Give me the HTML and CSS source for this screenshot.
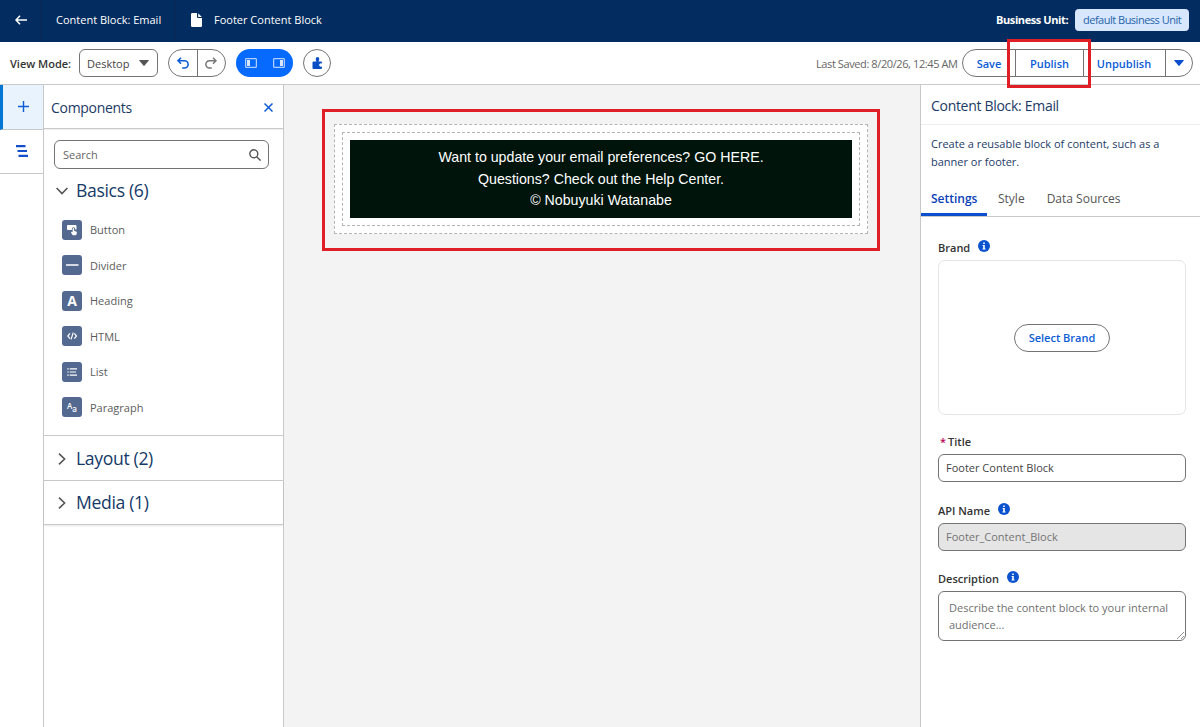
FILE: index.html
```html
<!DOCTYPE html>
<html lang="en">
<head>
  <meta charset="UTF-8" />
  <title>Footer Content Block</title>
  <link rel="stylesheet" href="styles.css">
</head>
<body>

<header class="topbar">
  <a class="back">
    <svg width="12" height="10" viewBox="0 0 12 10" fill="none" stroke="#fff" stroke-width="1.5"><path d="M5 .8L1 5l4 4.2M1 5h11"/></svg>
  </a>
  <div class="crumb">Content Block: Email</div>
  <div class="page-name">
    <svg width="11" height="14" viewBox="0 0 11 14" fill="#fff"><path d="M1.3 0H6v4q0 1 1 1h4v7.7q0 1.3-1.3 1.3H1.3Q0 14 0 12.7V1.3Q0 0 1.3 0zM7.2.3L10.8 4H7.2z"/></svg>
    <span>Footer Content Block</span>
  </div>
  <div class="unit">
    <b>Business Unit:</b>
    <span class="badge">default Business Unit</span>
  </div>
</header>

<div class="toolbar">
  <span class="view-label">View Mode:</span>
  <div class="select">Desktop
    <svg width="10" height="6" viewBox="0 0 10 6" fill="#555"><path d="M.6 0h8.800q.7 0 .4.6L5.600 5.600q-.6.6-1.200 0L.2.6Q-.1 0 .6 0z"/></svg>
  </div>
  <div class="history">
    <span><svg width="12" height="12" viewBox="0 0 12 12" fill="none" stroke="#0b5cd5" stroke-width="1.6"><path d="M4 .7L1 3.700l3 3M1.200 3.700h6.300a3.600 3.600 0 0 1 0 7.300H5.200"/></svg></span>
    <span><svg width="12" height="12" viewBox="0 0 12 12" fill="none" stroke="#777" stroke-width="1.5"><path d="M8 .7l3 3-3 3M10.800 3.700H4.500a3.600 3.600 0 0 0 0 7.300h2.300"/></svg></span>
  </div>
  <div class="panels">
    <svg width="12" height="10" viewBox="0 0 12 10"><path fill="none" stroke="#d8e6fe" d="M.7.7h10.600v8.600H.7z"/><path fill="#d8e6fe" d="M2 2h3v6H2z"/></svg>
    <svg width="12" height="10" viewBox="0 0 12 10"><path fill="none" stroke="#d8e6fe" d="M.7.7h10.600v8.600H.7z"/><path fill="#d8e6fe" d="M7 2h3v6H7z"/></svg>
  </div>
  <div class="puzzle">
    <svg width="11" height="12" viewBox="0 0 11 12" fill="#0b4fc4"><path d="M1.500 4.500h3Q3.600 3.200 3.700 1.900a1.800 1.800 0 0 1 3.600 0q0 1.300-.9 2.600H9q1 0 1 1v1Q7.600 5.800 7 8q.5 2.200 3 1.500V11q0 1-1 1H1.500q-1 0-1-1V5.500q0-1 1-1z"/></svg>
  </div>
  <div class="actions">
    <span class="saved">Last Saved: 8/20/26, 12:45 AM</span>
    <div class="btn-group">
      <span class="b-save">Save</span>
      <span class="b-publish">Publish</span>
      <span class="b-unpublish">Unpublish</span>
      <span class="b-more"><svg width="10" height="6" viewBox="0 0 10 6" fill="#0b4fd0"><path d="M.6 0h8.800q.7 0 .4.6L5.600 5.600q-.6.6-1.200 0L.2.6Q-.1 0 .6 0z"/></svg></span>
    </div>
  </div>
</div>

<main class="builder">
  <nav class="rail">
    <a class="active"><svg width="11" height="11" viewBox="0 0 11 11" stroke="#0b5cd5" stroke-width="1.4"><path d="M5.500 0v11M0 5.500h11"/></svg></a>
    <a><svg width="12" height="12" viewBox="0 0 12 12" fill="#1550cc"><path d="M0 0h9.500v2.200H0zM1.500 4.900H11v2.200H1.500zM2.500 9.800H12V12H2.500z"/></svg></a>
  </nav>

  <aside class="components">
    <div class="comp-head">
      <h2>Components</h2>
      <svg width="9" height="9" viewBox="0 0 9 9" stroke="#0b5cd5" stroke-width="1.5"><path d="M.5.5l8 8M8.500.5l-8 8"/></svg>
    </div>
    <div class="search">Search
      <svg width="12" height="12" viewBox="0 0 12 12" fill="none" stroke="#555" stroke-width="1.4"><circle cx="4.800" cy="4.800" r="4"/><path d="M7.700 7.700l3.900 3.900"/></svg>
    </div>
    <section class="basics">
      <h3><svg width="12" height="8" viewBox="0 0 12 8" fill="none" stroke="#555" stroke-width="1.6"><path d="M.6 1L6 6.600 11.400 1"/></svg>Basics (6)</h3>
      <ul>
        <li><svg class="tile" viewBox="0 0 20 20"><path fill="#fff" d="M6 5h7.500q1 0 1 1v3.500h-1.300V9a1.700 1.700 0 0 0-3.400 0v1H6Q5 10 5 9V6q0-1 1-1z"/><path fill="#fff" d="M10.600 9q0-.9.8-.9t.8.9v2l2 .4q.8.3.7 1.200l-.5 2q-.2.6-.8.6h-2.400q-.5 0-.8-.5l-1.300-2q-.3-.8.5-.9l1 .5z"/></svg>Button</li>
        <li><svg class="tile" viewBox="0 0 20 20"><path fill="#fff" d="M4 9.200h12.500v1.500H4z"/></svg>Divider</li>
        <li><span class="tile tile-a">A</span>Heading</li>
        <li><svg class="tile" viewBox="0 0 20 20" fill="none" stroke="#fff" stroke-width="1.2"><path d="M8 7.300L5.800 10 8 12.700M12.300 7.300l2.200 2.700-2.200 2.700M11.200 6.600L9.100 13.400"/></svg>HTML</li>
        <li><svg class="tile" viewBox="0 0 20 20"><path fill="#fff" d="M5.300 6.200h1.400v1.200H5.300zM7.700 6.200H15v1.200H7.700zM5.300 9.400h1.400v1.200H5.300zM7.700 9.400H14v1.200H7.700zM5.300 12.600h1.400v1.200H5.300zM7.700 12.600H15v1.200H7.700z"/></svg>List</li>
        <li><span class="tile tile-aa"><span>A</span><sub>a</sub></span>Paragraph</li>
      </ul>
    </section>
    <section class="closed">
      <h3><svg width="8" height="12" viewBox="0 0 8 12" fill="none" stroke="#555" stroke-width="1.6"><path d="M1 .6L6.600 6 1 11.400"/></svg>Layout (2)</h3>
    </section>
    <section class="closed last">
      <h3><svg width="8" height="12" viewBox="0 0 8 12" fill="none" stroke="#555" stroke-width="1.6"><path d="M1 .6L6.600 6 1 11.400"/></svg>Media (1)</h3>
    </section>
  </aside>

  <div class="canvas">
    <div class="frame">
      <div class="row">
        <div class="column">
          <div class="footer-text">
            <p>Want to update your email preferences? GO HERE.</p>
            <p>Questions? Check out the Help Center.</p>
            <p>© Nobuyuki Watanabe</p>
          </div>
        </div>
      </div>
    </div>
  </div>

  <aside class="props">
    <h2>Content Block: Email</h2>
    <p class="about">Create a reusable block of content, such as a<br>banner or footer.</p>
    <div class="tabs">
      <a class="on">Settings</a>
      <a>Style</a>
      <a>Data Sources</a>
    </div>
    <div class="form">
      <div class="label">Brand<svg class="info" viewBox="0 0 12 12"><circle cx="6" cy="6" r="6" fill="#0b52cf"/><path fill="#fff" d="M5.200 2.500h1.600v1.400H5.200zM4.600 5h2.200v3.400h.7v1H4.500v-1h.7V6h-.6z"/></svg></div>
      <div class="brand-box"><span class="pill">Select Brand</span></div>
      <div class="label title-label"><i>*</i>Title</div>
      <div class="input">Footer Content Block</div>
      <div class="label">API Name<svg class="info" viewBox="0 0 12 12"><circle cx="6" cy="6" r="6" fill="#0b52cf"/><path fill="#fff" d="M5.200 2.500h1.600v1.400H5.200zM4.600 5h2.200v3.400h.7v1H4.500v-1h.7V6h-.6z"/></svg></div>
      <div class="input disabled">Footer_Content_Block</div>
      <div class="label">Description<svg class="info" viewBox="0 0 12 12"><circle cx="6" cy="6" r="6" fill="#0b52cf"/><path fill="#fff" d="M5.200 2.500h1.600v1.400H5.200zM4.600 5h2.200v3.400h.7v1H4.500v-1h.7V6h-.6z"/></svg></div>
      <div class="textarea">Describe the content block to your internal<br>audience...
        <svg class="grip" width="7" height="7" viewBox="0 0 7 7" stroke="#777" stroke-width=".8"><path d="M0 7l7-7M4 7l3-3"/></svg>
      </div>
    </div>
  </aside>
</main>

</body>
</html>
```
FILE: styles.css
```css
* { box-sizing: border-box; }
body {
  margin: 0;
  height: 727px;
  display: flex;
  flex-direction: column;
  overflow: hidden;
  background: #fff;
  color: #444;
  font-family: "Open Sans", "Noto Sans", sans-serif;
  font-size: 11px;
  white-space: nowrap;
}
h2, h3, p, ul { margin: 0; padding: 0; font-weight: 400; }
svg { flex: none; display: block; }

/* header */
.topbar {
  height: 42px;
  flex: none;
  display: flex;
  align-items: center;
  padding-bottom: 2px;
  background: #032d60;
  color: #fff;
  font-weight: 500;
}
.back {
  width: 42px;
  height: 42px;
  display: flex;
  align-items: center;
  justify-content: center;
  border-right: 1px solid #0a2750;
}
.crumb {
  width: 133px;
  height: 42px;
  padding: 0 0 1px 14px;
  display: flex;
  align-items: center;
  border-right: 1px solid #0a2750;
}
.page-name { display: flex; align-items: center; gap: 12px; padding-left: 16px; }
.page-name span { padding-bottom: 1px; }
.unit { margin-left: auto; margin-right: 11px; display: flex; align-items: center; }
.unit b { width: 79px; padding-bottom: 1px; font-weight: 700; letter-spacing: -.4px; }
.badge {
  width: 114px;
  height: 22px;
  padding: 0 0 1px 8px;
  display: flex;
  align-items: center;
  border-radius: 4px;
  background: #d8e6fe;
  color: #2465a8;
  font-weight: 400;
  letter-spacing: -.5px;
}

/* toolbar */
.toolbar {
  height: 43px;
  flex: none;
  display: flex;
  align-items: center;
  padding: 0 7px 0 10px;
  border-bottom: 1px solid #c9c9c9;
}
.view-label { width: 69px; color: #333; font-weight: 600; }
.select {
  width: 79px;
  height: 28px;
  padding: 0 8px 0 7px;
  display: flex;
  align-items: center;
  justify-content: space-between;
  border: 1px solid #747474;
  border-radius: 6px;
}
.history {
  width: 58px;
  height: 28px;
  margin-left: 10px;
  display: flex;
  border: 1px solid #747474;
  border-radius: 14px;
}
.history span { flex: 1; display: flex; align-items: center; justify-content: center; }
.history span + span { border-left: 1px solid #747474; }
.panels {
  width: 57px;
  height: 28px;
  margin-left: 10px;
  padding: 0 8px 0 9px;
  display: flex;
  align-items: center;
  justify-content: space-between;
  border-radius: 14px;
  background: #066afe;
}
.puzzle {
  width: 28px;
  height: 28px;
  margin-left: 10px;
  display: flex;
  align-items: center;
  justify-content: center;
  border: 1px solid #747474;
  border-radius: 50%;
}
.actions { margin-left: auto; display: flex; align-items: center; }
.saved { width: 146px; color: #666; letter-spacing: -.4px; }
.btn-group {
  width: 231px;
  height: 28px;
  display: flex;
  border: 1px solid #747474;
  border-radius: 14px;
  color: #0b5cd5;
  font-weight: 600;
}
.btn-group > span { display: flex; align-items: center; justify-content: center; }
.b-save { width: 52px; }
.b-publish {
  position: relative;
  width: 69px;
  border-left: 1px solid #747474;
  border-right: 1px solid #747474;
}
/* highlight around the publish button */
.b-publish::after {
  content: "";
  box-sizing: border-box;
  position: absolute;
  z-index: 2;
  left: -9px;
  top: -11px;
  width: 84px;
  height: 49px;
  border: 3px solid #e01e26;
}
.b-unpublish { width: 81px; padding-right: 1px; }
.b-more { width: 27px; border-left: 1px solid #747474; }

.builder { flex: 1; display: flex; min-height: 0; }

/* left rail */
.rail { width: 44px; border-right: 1px solid #c9c9c9; }
.rail a {
  height: 44.5px;
  display: flex;
  align-items: center;
  justify-content: center;
  border-bottom: 1px solid #c9c9c9;
}
.rail .active { border-left: 3px solid #0176d3; background: #e8f3fe; }

/* components panel */
.components { width: 240px; border-right: 1px solid #c9c9c9; }
.comp-head {
  height: 44px;
  padding: 2px 10px 0 7px;
  display: flex;
  align-items: center;
  justify-content: space-between;
  border-bottom: 1px solid #c9c9c9;
  box-shadow: 0 1px 1px rgba(0, 0, 0, .06);
}
h2 { color: #1b3a66; font-size: 14px; letter-spacing: -.3px; }
.search {
  height: 29px;
  margin: 11px 14px 0 10px;
  padding: 0 7px 0 8px;
  display: flex;
  align-items: center;
  justify-content: space-between;
  border: 1px solid #747474;
  border-radius: 6px;
  color: #666;
}
h3 {
  display: flex;
  align-items: center;
  color: #153a68;
  font-size: 17.6px;
  line-height: 24px;
  letter-spacing: -.35px;
}
.basics { height: 267px; padding-top: 9px; border-bottom: 1px solid #c9c9c9; }
.basics h3 svg { margin: 2px 8px 0 12px; }
.basics ul { padding: 10px 0 0 18px; list-style: none; }
.basics li { height: 35.5px; display: flex; align-items: center; gap: 8px; color: #5c5c5c; }
.tile {
  width: 20px;
  height: 20px;
  flex: none;
  border-radius: 3px;
  background: #53698f;
  color: #fff;
}
.tile-a { font-size: 14px; font-weight: 700; line-height: 20px; text-align: center; }
.tile-aa { display: flex; padding-left: 5px; font-size: 8px; font-weight: 600; line-height: 17px; }
.tile-aa sub { font-size: 8px; line-height: 24px; vertical-align: baseline; }
.closed { height: 44.5px; padding-top: 9.5px; border-bottom: 1px solid #c9c9c9; }
.closed h3 svg { margin: 2px 10px 0 14px; }
.last { box-shadow: 0 1px 2px rgba(0, 0, 0, .1); }

/* canvas */
.canvas { flex: 1; padding: 24px 40px 0 38px; background: #f3f3f3; }
.frame { height: 142px; padding: 12px 9px; border: 3px solid #e01e26; }
.row { height: 110px; padding: 7px; border: 1px dashed #b4b4b4; background: #fff; }
.column { height: 94px; padding: 7px; border: 1px dashed #b4b4b4; }
.footer-text {
  height: 78px;
  padding-top: 7px;
  background: #00140c;
  color: #fff;
  font-family: "Liberation Sans", Arial, sans-serif;
  font-size: 14.2px;
  line-height: 21.5px;
  text-align: center;
}

/* properties panel */
.props { width: 280px; border-left: 1px solid #c9c9c9; }
.props h2 {
  height: 40px;
  padding: 1px 0 0 10px;
  display: flex;
  align-items: center;
  border-bottom: 1px solid #eee;
}
.about { height: 60px; padding: 10px 10px 0; color: #1d3c68; line-height: 17.5px; }
.tabs {
  height: 32px;
  display: flex;
  border-bottom: 1px solid #c9c9c9;
  color: #555;
  font-size: 12px;
  font-weight: 500;
}
.tabs a { height: 31px; padding: 5px 11px 0; }
.tabs .on {
  width: 66px;
  padding: 5px 0 0 10px;
  border-bottom: 3px solid #0b4fcf;
  color: #0b3fb5;
  font-weight: 600;
}
.form { padding: 18px 14px 0 17px; }
.label {
  height: 25px;
  padding-top: 5px;
  display: flex;
  align-items: flex-start;
  gap: 8px;
  color: #333;
  font-weight: 600;
  line-height: 15px;
}
.info { width: 12px; height: 12px; }
.brand-box {
  height: 155px;
  margin-bottom: 14px;
  display: flex;
  align-items: center;
  justify-content: center;
  border: 1px solid #e5e5e5;
  border-radius: 7px;
}
.pill {
  width: 96px;
  height: 28px;
  display: flex;
  align-items: center;
  justify-content: center;
  border: 1px solid #747474;
  border-radius: 14px;
  color: #0b5cd5;
  font-weight: 600;
}
.title-label { gap: 2px; padding-left: 2px; }
.title-label i { color: #b60554; font-style: normal; }
.input {
  height: 28px;
  margin-bottom: 15.5px;
  padding: 0 0 1px 7px;
  display: flex;
  align-items: center;
  border: 1px solid #747474;
  border-radius: 6px;
  color: #444;
}
.disabled { background: #e5e5e5; color: #747474; }
.textarea {
  position: relative;
  height: 50px;
  padding: 7px 10px;
  border: 1px solid #747474;
  border-radius: 6px;
  color: #707070;
  line-height: 17px;
}
.grip { position: absolute; right: 1px; bottom: 1px; }
```
